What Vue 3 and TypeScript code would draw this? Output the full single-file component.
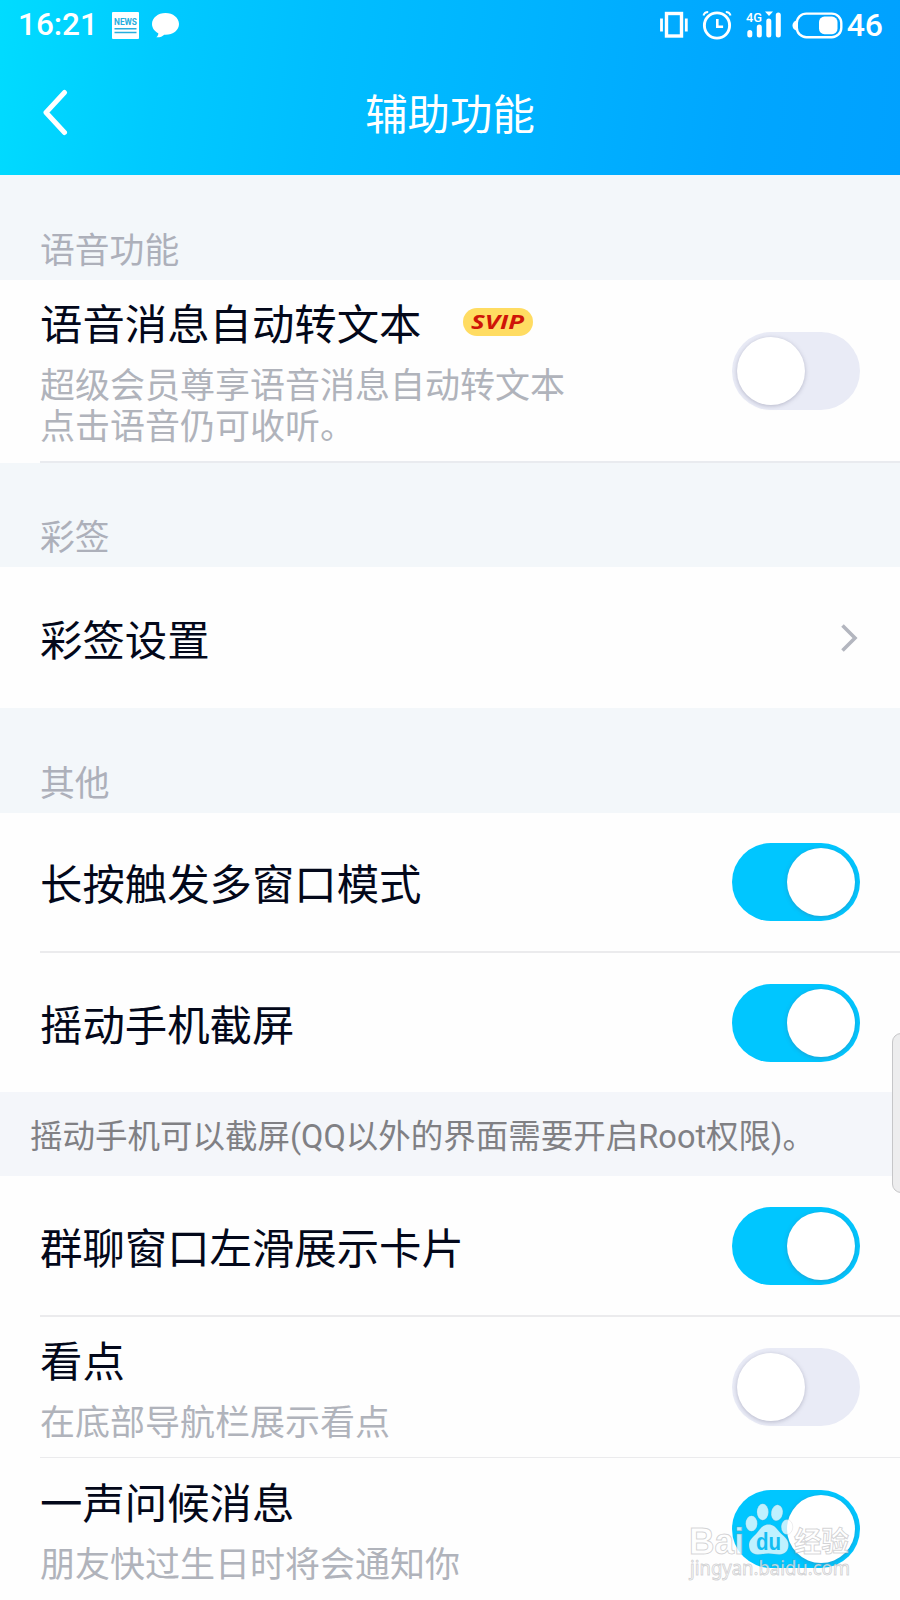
<script setup lang="ts">
interface Row {
  title: string
  lines?: string[]
  badge?: string
  control: 'on' | 'off' | 'link'
  size: string
}

interface Group {
  heading?: string
  note?: string
  rows: Row[]
}

const groups: Group[] = [
  {
    heading: '语音功能',
    rows: [
      {
        title: '语音消息自动转文本',
        lines: ['超级会员尊享语音消息自动转文本', '点击语音仍可收听。'],
        badge: 'SVIP',
        control: 'off',
        size: 'tall',
      },
    ],
  },
  { heading: '彩签', rows: [{ title: '彩签设置', control: 'link', size: 'plain' }] },
  {
    heading: '其他',
    rows: [
      { title: '长按触发多窗口模式', control: 'on', size: 'single divided' },
      { title: '摇动手机截屏', control: 'on', size: 'single last' },
    ],
  },
  {
    note: '摇动手机可以截屏(QQ以外的界面需要开启Root权限)。',
    rows: [
      { title: '群聊窗口左滑展示卡片', control: 'on', size: 'plain divided' },
      { title: '看点', lines: ['在底部导航栏展示看点'], control: 'off', size: 'double divided' },
      { title: '一声问候消息', lines: ['朋友快过生日时将会通知你'], control: 'on', size: 'double' },
    ],
  },
]
</script>

<template>
  <div class="screen">
    <header class="header">
      <div class="status">
        <span class="clock">16:21</span>
        <svg class="news" width="27" height="27" viewBox="0 0 27 27">
          <rect width="27" height="27" rx="1" fill="#fff" />
          <text x="2" y="12.6" textLength="23" lengthAdjust="spacingAndGlyphs" class="news-text">NEWS</text>
          <path d="M2.5 16.8h22M2.5 20.4h22" stroke="#27aede" stroke-width="1.5" />
        </svg>
        <svg class="bubble" width="27" height="25" viewBox="0 0 27 25">
          <path d="M13.5 0C6 0 0 4.8 0 11c0 4 2.600 7.400 6.300 9.300C6.400 22 5.600 23.300 4.300 24.300c3.600.2 6.200-.9 7.900-2.600C20.500 22.300 27 17.500 27 11 27 4.800 21 0 13.500 0z" fill="#fff" />
        </svg>
        <div class="status-right">
          <svg width="28" height="28" viewBox="0 0 28 28">
            <rect x="6.500" y="2.500" width="15" height="22.500" fill="none" stroke="#fff" stroke-width="3.400" />
            <path d="M1.500 7.500v13M26.300 7.500v13" stroke="#fff" stroke-width="2.800" />
          </svg>
          <svg class="alarm" width="30" height="30" viewBox="0 0 30 30">
            <circle cx="15" cy="15.500" r="12.600" fill="none" stroke="#fff" stroke-width="2.900" />
            <path d="M15.300 9v7.800h5.800" fill="none" stroke="#fff" stroke-width="2.600" />
            <path d="M1.500 5.500C2 3.500 4 2 6.200 2M28.500 5.500C28 3.500 26 2 23.800 2" fill="none" stroke="#fff" stroke-width="2" />
          </svg>
          <svg class="signal" width="36" height="28" viewBox="0 0 36 28">
            <text x="0" y="11" textLength="16" lengthAdjust="spacingAndGlyphs" class="net">4G</text>
            <path d="M3.800 21.500v2.500M13.300 16v8M22.800 10v14M32.300 4v20" stroke="#fff" stroke-width="5" stroke-linecap="round" />
            <path d="M19 .5h8l-4 4.500z" fill="#fff" />
          </svg>
          <svg class="battery" width="51" height="27" viewBox="0 0 51 27">
            <rect x="4.800" y="1.600" width="44.500" height="23.600" rx="9.500" fill="none" stroke="#fff" stroke-width="2.400" />
            <path d="M4 8.500C1.500 9.500.5 11.500.5 13.500s1 4 3.500 5z" fill="#fff" />
            <rect x="27" y="4.600" width="18.500" height="17.600" rx="5.500" fill="#fff" />
          </svg>
          <span class="percent">46</span>
        </div>
      </div>
      <div class="nav">
        <svg class="back" width="28" height="48" viewBox="0 0 28 48">
          <path d="M22.500 3.500 4 23.500l18.500 20" fill="none" stroke="#fff" stroke-width="5" stroke-linecap="round" stroke-linejoin="round" />
        </svg>
        <h1>辅助功能</h1>
      </div>
    </header>

    <section v-for="(group, g) in groups" :key="g">
      <h2 v-if="group.heading" class="heading" :class="'heading-' + g">{{ group.heading }}</h2>
      <p v-if="group.note" class="note">{{ group.note }}</p>
      <div v-for="row in group.rows" :key="row.title" class="row" :class="row.size">
        <div class="copy" :class="{ stacked: row.lines }">
          <div class="title">
            <span>{{ row.title }}</span>
            <span v-if="row.badge" class="badge">
              <svg width="70" height="28" viewBox="0 0 70 28">
                <text x="8" y="21" textLength="53" lengthAdjust="spacingAndGlyphs">{{ row.badge }}</text>
              </svg>
            </span>
          </div>
          <div v-for="line in row.lines" :key="line" class="line">{{ line }}</div>
        </div>
        <svg v-if="row.control === 'link'" class="arrow" width="20" height="30" viewBox="0 0 20 30">
          <path d="M2.500 2.500 15 15 2.500 27.500" fill="none" stroke="#b3b6bf" stroke-width="3.600" />
        </svg>
        <span v-else class="toggle" :class="row.control"><i class="knob"></i></span>
      </div>
    </section>

    <div class="handle"></div>

    <svg class="watermark" width="190" height="96" viewBox="0 0 190 96">
      <g class="mark">
        <text x="9" y="54" textLength="55" lengthAdjust="spacingAndGlyphs" class="bai">Bai</text>
        <ellipse cx="71.500" cy="23.500" rx="5.800" ry="7.800" />
        <ellipse cx="82.700" cy="12" rx="5.800" ry="8.200" />
        <ellipse cx="97" cy="12.800" rx="5.800" ry="8" transform="rotate(10 97 12.800)" />
        <ellipse cx="107" cy="27" rx="5.800" ry="7.500" />
        <path d="M88.500 24.500c7 0 9 6 13 9.500 4 3.500 7 6 7 11 0 6-4 9.500-9 9.500-4 0-7-1-11-1s-7 1-11 1c-5 0-8.500-3.500-8.500-9.500 0-5 3.500-7.500 7-11s5.500-9.500 12.500-9.500z" />
        <text x="114" y="52" textLength="55" lengthAdjust="spacingAndGlyphs" class="jing">经验</text>
        <text x="10" y="75" textLength="160" lengthAdjust="spacingAndGlyphs" class="site">jingyan.baidu.com</text>
      </g>
      <text x="76" y="50" textLength="25" lengthAdjust="spacingAndGlyphs" class="du">du</text>
    </svg>
  </div>
</template>

<style>
body {
  margin: 0;
  background: #fff;
}
</style>

<style scoped>
.screen {
  position: relative;
  width: 900px;
  height: 1600px;
  overflow: hidden;
  background: #fefefe;
  font-family: "Noto Sans CJK SC", sans-serif;
}
.header {
  height: 175px;
  color: #fff;
  background: linear-gradient(98deg, #00dcff 0%, #00caff 18%, #00beff 36%, #00b3ff 58%, #00a6ff 82%, #00a1ff 100%);
}
.status {
  display: flex;
  align-items: center;
  height: 50px;
  padding: 0 17px 0 18px;
  font-family: Roboto, sans-serif;
}
.clock {
  width: 94px;
  font-size: 31.5px;
  font-weight: 500;
  line-height: 52px;
}
.bubble {
  margin-left: 13px;
}
.news-text {
  font: 700 8.500px Roboto, sans-serif;
  fill: #27aede;
}
.status-right {
  display: flex;
  align-items: center;
  margin-left: auto;
}
.alarm {
  margin-left: 14px;
}
.signal {
  margin-left: 14px;
}
.net {
  font: 500 13px Roboto, sans-serif;
  fill: #fff;
}
.battery {
  margin-left: 10px;
}
.percent {
  margin-left: 4px;
  font-size: 32px;
  font-weight: 500;
  line-height: 50px;
}
.nav {
  display: grid;
  grid-template-columns: 100px 1fr 100px;
  align-items: center;
  height: 125px;
}
.back {
  margin-left: 42px;
}
h1 {
  margin: 0;
  font-size: 42.400px;
  font-weight: 400;
  line-height: 62px;
  height: 64px;
  text-align: center;
}
.heading {
  box-sizing: border-box;
  height: 105px;
  margin: 0;
  padding: 48px 40px 0;
  color: #adb0ba;
  background: #f3f7fa;
  font-size: 34.800px;
  font-weight: 400;
  line-height: 50px;
}
.heading-1 {
  height: 104px;
  padding-top: 47px;
}
.note {
  height: 84px;
  margin: 0;
  padding-left: 30px;
  color: #808084;
  background: #f4f6fa;
  font-family: Roboto, "Noto Sans CJK SC", sans-serif;
  font-size: 32.500px;
  line-height: 91px;
  white-space: nowrap;
}
.row {
  display: flex;
  align-items: center;
  justify-content: space-between;
  box-sizing: border-box;
  margin-left: 40px;
  padding-right: 40px;
}
.plain {
  height: 141px;
}
.single {
  height: 140px;
}
.single.last {
  height: 139px;
}
.tall {
  height: 183px;
  border-bottom: 2px solid #e9ebef;
}
.double {
  height: 142px;
}
.divided {
  border-bottom: 2px solid #ebebed;
}
.double.divided {
  height: 141px;
  border-bottom-width: 1px;
}
.copy {
  white-space: nowrap;
}
.stacked {
  padding-bottom: 5px;
}
.title {
  display: flex;
  align-items: center;
  height: 60px;
  color: #03081a;
  font-size: 42.400px;
  line-height: 60px;
}
.stacked .title {
  margin-bottom: 10px;
}
.title > span:first-child {
  height: 60px;
}
.badge {
  width: 70px;
  height: 28px;
  margin-left: 41px;
  border-radius: 14px;
  background: #ffdc62;
}
.badge svg {
  display: block;
}
.badge text {
  font: italic 700 20px "Open Sans", "Noto Sans", sans-serif;
  fill: #cf1508;
}
.line {
  color: #b0b3bb;
  font-size: 35px;
  line-height: 41px;
}
.toggle {
  display: flex;
  align-items: center;
  box-sizing: border-box;
  width: 128px;
  height: 78px;
  padding: 0 5px;
  border-radius: 39px;
  background: #e9ebf6;
}
.toggle.on {
  justify-content: flex-end;
  background: #00c6ff;
}
.knob {
  width: 68px;
  height: 68px;
  border-radius: 50%;
  background: #fff;
  box-shadow: 0 1px 4px rgba(90, 90, 120, 0.35);
}
.handle {
  position: absolute;
  left: 892px;
  top: 1033px;
  width: 20px;
  height: 158px;
  border: 1px solid #c6c6c8;
  border-radius: 9px;
  background: #ededee;
}
.watermark {
  position: absolute;
  left: 680px;
  top: 1500px;
}
.mark {
  fill: rgba(255, 255, 255, 0.75);
  stroke: rgba(140, 140, 145, 0.38);
  stroke-width: 1px;
}
.mark ellipse,
.mark path {
  stroke: rgba(140, 140, 145, 0.15);
}
.bai {
  font: 700 37px "Liberation Sans", sans-serif;
}
.jing {
  font: 700 28px "Noto Sans CJK SC", sans-serif;
}
.site {
  font: 400 20px "Noto Sans", sans-serif;
}
.du {
  font: 700 23px "Liberation Sans", sans-serif;
  fill: #12bdf2;
}
</style>
